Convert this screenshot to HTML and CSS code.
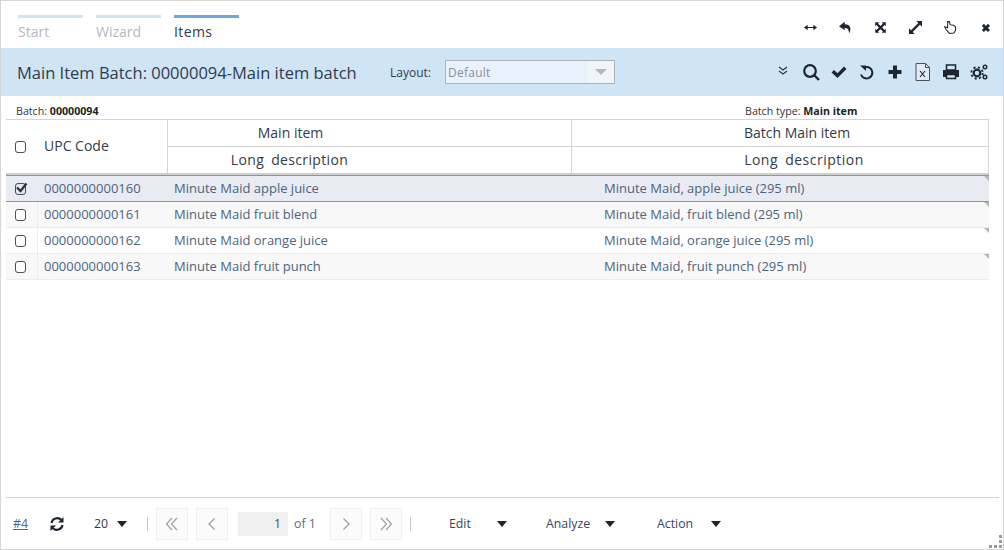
FILE: index.html
```html
<!DOCTYPE html>
<html lang="en">
<head>
<meta charset="utf-8">
<title>Main Item Batch</title>
<link rel="stylesheet" href="styles.css">
</head>
<body>
<div class="window">
  <div class="topbar">
    <div class="steps">
      <div class="step done">Start</div>
      <div class="step done">Wizard</div>
      <div class="step current">Items</div>
    </div>
    <div class="win-icons">
      <svg class="ic" viewBox="0 0 16 16"><path d="M1 8h14" stroke="#1d2530" stroke-width="1.300"/><path d="M4.500 4.500 0 8l4.500 3.500zM11.500 4.500 16 8l-4.500 3.500z" fill="#1d2530"/></svg>
      <svg class="ic" viewBox="0 0 16 16"><path d="M7 1 0 6.500 7 11.500V8.500c3.500 0 5 1.500 5.500 6.500 3-5 2-11-5.500-11z" fill="#1d2530"/></svg>
      <svg class="ic" viewBox="0 0 16 16"><path d="M1.500 1.500h5L5 3l3 3 3-3-1.500-1.500h5v5L13 5l-3 3 3 3 1.500-1.500v5h-5L11 13l-3-3-3 3 1.500 1.500h-5v-5L3 11l3-3-3-3-1.500 1.500z" fill="#1d2530"/></svg>
      <svg class="ic" viewBox="0 0 16 16"><path d="M9 0h7v7l-2.500-2.500-9 9L7 16H0V9l2.500 2.500 9-9z" fill="#1d2530"/></svg>
      <svg class="ic" viewBox="0 0 16 16"><path d="M4.500.800h2.300l.7 3.700 5 1 1.500 1.500.3 4-2 3.800-5.500.5L2.500 10.500.8 7l3.700 1.200z" fill="#fff" stroke="#1d2530" stroke-width="1.300"/></svg>
      <svg class="ic" viewBox="0 0 16 16"><path d="m3.500 6 2.500-2.500 2.500 2.500 2.500-2.500L13.500 6 11 8.500l2.500 2.500-2.500 2.500L8.500 11 6 13.500 3.500 11 6 8.500z" fill="#1d2530"/></svg>
    </div>
  </div>

  <div class="header">
    <div class="title">Main Item Batch: 00000094-Main item batch</div>
    <div class="layout">
      <span class="layout-label">Layout:</span>
      <div class="select"><span class="select-value">Default</span><span class="select-btn"><i class="caret-grey"></i></span></div>
    </div>
    <div class="tools">
      <svg class="tool chev" viewBox="0 0 12 12"><path d="m2 2 4 3 4-3M2 6l4 3 4-3" fill="none" stroke="#2c3440" stroke-width="1.100"/></svg>
      <svg class="tool" viewBox="0 0 18 18"><circle cx="8" cy="8" r="5.800" fill="none" stroke="#1d2530" stroke-width="2.200"/><path d="m12 12 5 5" stroke="#1d2530" stroke-width="2.400"/></svg>
      <svg class="tool" viewBox="0 0 18 18"><path d="m1.500 9.500 2.500-2.500 3.500 3.300L14 3.500 16.500 6 7.500 15z" fill="#1d2530"/></svg>
      <svg class="tool" viewBox="0 0 18 18"><path d="M6 4.500a5.800 5.800 0 1 1-3 7" fill="none" stroke="#1d2530" stroke-width="2"/><path d="M2 2.500h6V8z" fill="#1d2530"/></svg>
      <svg class="tool" viewBox="0 0 18 18"><path d="M7 2.500h4V7h4.500v4H11v4.500H7V11H2.500V7H7z" fill="#1d2530"/></svg>
      <svg class="tool" viewBox="0 0 18 18"><path d="M2 .5h9.500l4 4v13H2z" fill="#dfeaf2" stroke="#4a5058"/><path d="M11.500.5v4h4" fill="none" stroke="#4a5058"/><path d="m6 8 5 6M11 8l-5 6" stroke="#1d2530" stroke-width="1.100"/></svg>
      <svg class="tool" viewBox="0 0 18 18"><path d="M4.500 2h9v5h-9z" fill="none" stroke="#1d2530" stroke-width="1.500"/><path d="M1 7h16v7h-3v-2.500H4V14H1z" fill="#1d2530"/><path d="M4.500 11.500h9v4h-9z" fill="none" stroke="#1d2530" stroke-width="1.500"/></svg>
      <svg class="tool" viewBox="0 0 18 18"><circle cx="7" cy="10" r="3.300" fill="none" stroke="#1d2530" stroke-width="2.200"/><circle cx="7" cy="10" r="5.700" fill="none" stroke="#1d2530" stroke-width="1.800" stroke-dasharray="2.200 2.300"/><circle cx="15" cy="4" r="1.800" fill="none" stroke="#1d2530" stroke-width="1.400"/><circle cx="15" cy="14" r="1.800" fill="none" stroke="#1d2530" stroke-width="1.400"/></svg>
    </div>
  </div>

  <div class="info">
    <div class="info-left">Batch: <b>00000094</b></div>
    <div class="info-right">Batch type: <b>Main item</b></div>
  </div>

  <div class="grid-head">
    <div class="hcell-check"><span class="check"></span></div>
    <div class="hcell-code">UPC Code</div>
    <div class="hcell-group">
      <div class="hcell-title">Main item</div>
      <div class="hcell-sub">Long description</div>
    </div>
    <div class="hcell-group last">
      <div class="hcell-title">Batch Main item</div>
      <div class="hcell-sub">Long description</div>
    </div>
  </div>

  <div class="rows">
    <div class="row selected">
      <div class="c-check"><span class="check on"><svg viewBox="0 0 12 12"><path d="M1.500 5.500 5 9l6-7.500" fill="none" stroke="#2b3340" stroke-width="2.200"/></svg></span></div>
      <div class="c-code">0000000000160</div><div class="c-main">Minute Maid apple juice</div><div class="c-desc">Minute Maid, apple juice (295 ml)</div>
    </div>
    <div class="row alt">
      <div class="c-check"><span class="check"></span></div>
      <div class="c-code">0000000000161</div><div class="c-main">Minute Maid fruit blend</div><div class="c-desc">Minute Maid, fruit blend (295 ml)</div>
    </div>
    <div class="row">
      <div class="c-check"><span class="check"></span></div>
      <div class="c-code">0000000000162</div><div class="c-main">Minute Maid orange juice</div><div class="c-desc">Minute Maid, orange juice (295 ml)</div>
    </div>
    <div class="row alt">
      <div class="c-check"><span class="check"></span></div>
      <div class="c-code">0000000000163</div><div class="c-main">Minute Maid fruit punch</div><div class="c-desc">Minute Maid, fruit punch (295 ml)</div>
    </div>
  </div>

  <div class="footer">
    <a class="count" href="#">#4</a>
    <svg class="refresh" viewBox="0 0 16 16"><path d="M2.500 7A5.700 5.700 0 0 1 12.300 4M13.500 9A5.700 5.700 0 0 1 3.700 12" fill="none" stroke="#1d2530" stroke-width="2.100"/><path d="M14.500 1v5.500H9zM1.500 15V9.500H7z" fill="#1d2530"/></svg>
    <span class="pagesize">20</span><i class="caret size-caret"></i>
    <span class="sep first"></span>
    <span class="pg"><svg viewBox="0 0 16 16"><path d="M8 2 2.500 8 8 14M13 2 7.500 8 13 14" fill="none" stroke="#a0a0a0" stroke-width="1.200"/></svg></span>
    <span class="pg"><svg viewBox="0 0 16 16"><path d="M10.500 2.500 5 8l5.500 5.500" fill="none" stroke="#a0a0a0" stroke-width="1.300"/></svg></span>
    <span class="pageno">1</span><span class="of">of 1</span>
    <span class="pg"><svg viewBox="0 0 16 16"><path d="M5.500 2.500 11 8l-5.500 5.500" fill="none" stroke="#a0a0a0" stroke-width="1.300"/></svg></span>
    <span class="pg"><svg viewBox="0 0 16 16"><path d="M3 2l5.500 6L3 14M8 2l5.500 6L8 14" fill="none" stroke="#a0a0a0" stroke-width="1.200"/></svg></span>
    <span class="sep second"></span>
    <span class="menu edit">Edit</span><i class="caret"></i>
    <span class="menu analyze">Analyze</span><i class="caret"></i>
    <span class="menu action">Action</span><i class="caret"></i>
  </div>
  <div class="grip"><i></i><i></i><i></i><i></i><i></i><i></i><i></i><i></i><i></i></div>
</div>
</body>
</html>
```
FILE: styles.css
```css
* { box-sizing: border-box; }
html, body { margin: 0; height: 100%; }
body { font-family: "Open Sans", sans-serif; color: #2f3b4c; background: #fff; overflow: hidden; }

.window {
  position: relative;
  width: 1004px;
  height: 550px;
  border: 1px solid #d6d6d6;
  display: flex;
  flex-direction: column;
}

.topbar { height: 47px; display: flex; justify-content: space-between; flex: none; }
.steps { display: flex; gap: 13px; padding: 14px 0 0 17px; }
.step { width: 65px; border-top: 3px solid #cfe5f6; font-size: 14px; line-height: 20px; padding-top: 4px; color: #b4b9bf; }
.step.current { border-top-color: #6fa8dc; color: #2f3b4c; letter-spacing: .4px; }
.win-icons { display: flex; gap: 22px; padding: 20px 11px 0 0; }
.ic { width: 13px; height: 13px; display: block; }

.header {
  height: 48px; flex: none; background: #cfe5f6;
  display: flex; align-items: center; padding-left: 16px; position: relative;
}
.title { font-size: 16.500px; width: 373px; color: #2f3b4c; white-space: nowrap; }
.layout { display: flex; align-items: center; }
.layout-label { font-size: 12px; width: 55px; color: #333b47; }
.select { width: 170px; height: 24px; border: 1px solid #aeb2b6; background: #e9f2fb; display: flex; justify-content: space-between; }
.select-value { font-size: 12px; line-height: 24px; padding-left: 2px; color: #8b9097; letter-spacing: .25px; }
.select-btn { width: 27px; background: #f0f5fa; display: flex; align-items: center; justify-content: center; }
.caret-grey { border: 6px solid transparent; border-top: 6px solid #b3b6ba; border-bottom: 0; }
.tools { margin-left: auto; display: flex; align-items: center; gap: 10px; padding-right: 15px; }
.tool { width: 18px; height: 18px; display: block; }
.tool.chev { width: 12px; height: 12px; margin-right: 3px; margin-top: -3px; }

.info { height: 23px; flex: none; display: flex; font-size: 10.670px; line-height: 14px; padding: 8px 0 0 15px; color: #333; }
.info-left { width: 729px; }
.info b { font-weight: 700; color: #1c1f24; }

.grid-head {
  margin-left: 5px; width: 983px; height: 57px; flex: none;
  border-top: 1px solid #d4d4d4; border-bottom: 3px solid #cfcfcf; border-right: 1px solid #d4d4d4;
  display: flex; color: #333b47;
}
.hcell-check { width: 31px; display: flex; align-items: center; padding-left: 9px; }
.hcell-code { width: 131px; border-right: 1px solid #d4d4d4; padding-left: 7px; font-size: 14px; line-height: 52px; }
.hcell-group { width: 404px; border-right: 1px solid #d4d4d4; text-align: center; }
.hcell-group.last { width: 416px; border-right: 0; }
.hcell-title { height: 27px; border-bottom: 1px solid #d4d4d4; font-size: 14px; line-height: 26px; padding-right: 158px; }
.hcell-sub { font-size: 14px; line-height: 26px; padding-right: 160px; letter-spacing: .35px; word-spacing: 3px; }
.hcell-group.last .hcell-title { padding-right: 0; padding-left: 34px; }
.hcell-group.last .hcell-sub { padding-right: 0; padding-left: 48px; letter-spacing: .5px; }

.rows { margin-left: 5px; width: 983px; flex: none; }
.row {
  height: 26px; display: flex; position: relative; font-size: 13px; line-height: 25px;
  border-bottom: 1px solid #ececec; color: #4d6480;
}
.row::after {
  content: ""; position: absolute; right: 0; top: 0;
  border-top: 5px solid #b5b5ba; border-left: 5px solid transparent;
}
.row.alt { background: #f8f8f8; }
.row.selected { background: #e8ebf1; border-top: 1px solid #6c9bd1; border-bottom: 1px solid #6c9bd1; height: 27px; margin-top: -1px; }
.c-check { width: 32px; display: flex; align-items: center; padding-left: 9px; border-right: 1px solid #ececec; }
.row.selected .c-check { border-right: 0; }
.c-code { width: 130px; padding-left: 6px; }
.c-main { width: 430px; padding-left: 6px; }
.c-desc { padding-left: 6px; }

.check { display: block; width: 11px; height: 12px; border: 1.500px solid #4a4f57; border-radius: 3px; background: #fff; position: relative; }
.check svg { position: absolute; left: -1px; top: -2px; width: 13px; height: 12px; }
.check.on { background: #e4e6ea; }

.footer {
  position: absolute; left: 5px; top: 496px; width: 993px; height: 52px;
  border-top: 1px solid #d4d4d4; display: flex; align-items: center; padding-left: 7px; font-size: 12.300px;
}
.count { color: #47688a; text-decoration: underline; width: 36px; }
.refresh { width: 16px; height: 16px; margin-right: 29px; }
.pagesize { width: 23px; color: #2f3b4c; }
.caret { display: block; border: 5px solid transparent; border-top: 6px solid #1d2530; border-bottom: 0; }
.size-caret { margin-right: 20px; }
.sep { width: 1px; height: 14px; background: #c8c8c8; }
.sep.first { margin-right: 8px; }
.pg { width: 32px; height: 32px; border: 1px solid #f0f0f0; background: #fbfbfb; display: flex; align-items: center; justify-content: center; margin-right: 8px; }
.pg svg { width: 16px; height: 16px; }
.pageno { width: 50px; height: 24px; margin-left: 2px; background: #f0f0f0; text-align: right; padding-right: 7px; line-height: 24px; color: #2b4a8a; }
.of { width: 42px; padding-left: 6px; color: #5a6a80; }
.menu { color: #3a4660; }
.menu.edit { margin-left: 38px; width: 48px; }
.menu.analyze { margin-left: 39px; width: 59px; }
.menu.action { margin-left: 42px; width: 54px; }

.grip { position: absolute; right: 1px; bottom: 1px; width: 13px; height: 13px; display: grid; grid-template-columns: repeat(3, 3px); grid-auto-rows: 3px; gap: 2px; }
.grip i { background: #9a9aa2; }
.grip i:nth-child(1), .grip i:nth-child(2), .grip i:nth-child(4), .grip i:nth-child(5) { background: transparent; }
```
